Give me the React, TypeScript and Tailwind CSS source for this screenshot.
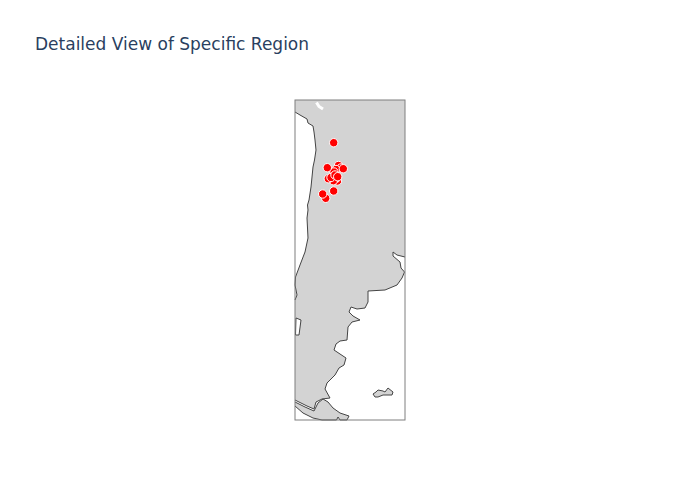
const markers = [
  [338.5, 165.5], [341, 168], [336, 169.5], [334, 172], [343.3, 168.7], [327.3, 167.7], [333.7, 142.7],
  [337.5, 181], [336.5, 178], [333.3, 180.7], [328.3, 178.7], [331, 177.5], [335, 175], [337.7, 176.7],
  [333.7, 191], [325.7, 198.3], [322.7, 194],
];

// west coast down to the frame, then east coast from the strait back up
const coastNorth =
  "M295 112 L300 115 L307 119 L308 123 L313 126 L314 132 L315 140 L316 150 L314.5 160 L313 167 L312 177 L311 187 L309 200 L307.5 205 L308 210 L307 218 L307.5 228 L308 238 L305 252 L300 265 L295.5 277 L295 285 L297 295 L295 300";
const coastSouth =
  "M295 400 L307 406 L314 409 L316 402 L322 399 L330 398 L325 389 L327 383 L335 375 L339 368 L344 365 L346 358 L340 354 L334 350 L336 344 L340 341 L347 340 L348 327 L352 322 L360 320 L353 316 L349 312 L351 307 L357 309 L365 308 L368 302 L368 291 L385 290 L397 285 L402 278 L404.5 272 L401 268 L400 262 L393 256 L393 252 L397 255 L405 257";
const land = coastNorth + " L" + coastSouth.slice(1) + " L405 100 L295 100 Z";

const fuego =
  "M295 402 L305 407 L314 411 L318 403 L323 399 L328 402 L333 408 L340 413 L349 416 L347 420 L340 420 L338 417 L336.5 420 L322 420 L313 418 L303 413 L295 406";

export default function App() {
  return (
    <div className="w-[700px] h-[500px] bg-white relative font-['DejaVu_Sans',sans-serif]">
      <div className="pt-[33px] pl-[35px] text-[17px] leading-[23px] text-[#2a3f5f]">
        Detailed View of Specific Region
      </div>
      <div className="flex justify-center mt-[43px]">
        <svg width="112" height="322" viewBox="294 99 112 322" className="block">
          <path d={land} fill="#d3d3d3" />
          <path d={coastNorth} fill="none" stroke="#444" strokeWidth="1" strokeLinejoin="round" />
          <path d={coastSouth} fill="none" stroke="#444" strokeWidth="1" strokeLinejoin="round" />
          <path d={fuego} fill="#d3d3d3" stroke="#444" strokeWidth="1" strokeLinejoin="round" />
          <path d="M296 318 L301 320 L299 335 L295.5 335 Z" fill="#fff" stroke="#444" strokeWidth="1" />
          <path d="M373 394 L376 392 L378 390 L383 391 L385 392 L388 388 L393 392 L392 395 L387 395 L383 395 L378 397 L375 397 Z" fill="#d3d3d3" stroke="#444" strokeWidth="1" />
          <path d="M316.5 102.5 L319 106.5 L323 109" fill="none" stroke="#fff" strokeWidth="3" />
          <rect x="295" y="100" width="110" height="320" fill="none" stroke="#7f7f7f" strokeWidth="1" />
          {markers.map(([cx, cy], i) => (
            <circle key={i} cx={cx} cy={cy} r="4.2" fill="#ff0000" stroke="#fff" strokeWidth="1" />
          ))}
        </svg>
      </div>
    </div>
  );
}
